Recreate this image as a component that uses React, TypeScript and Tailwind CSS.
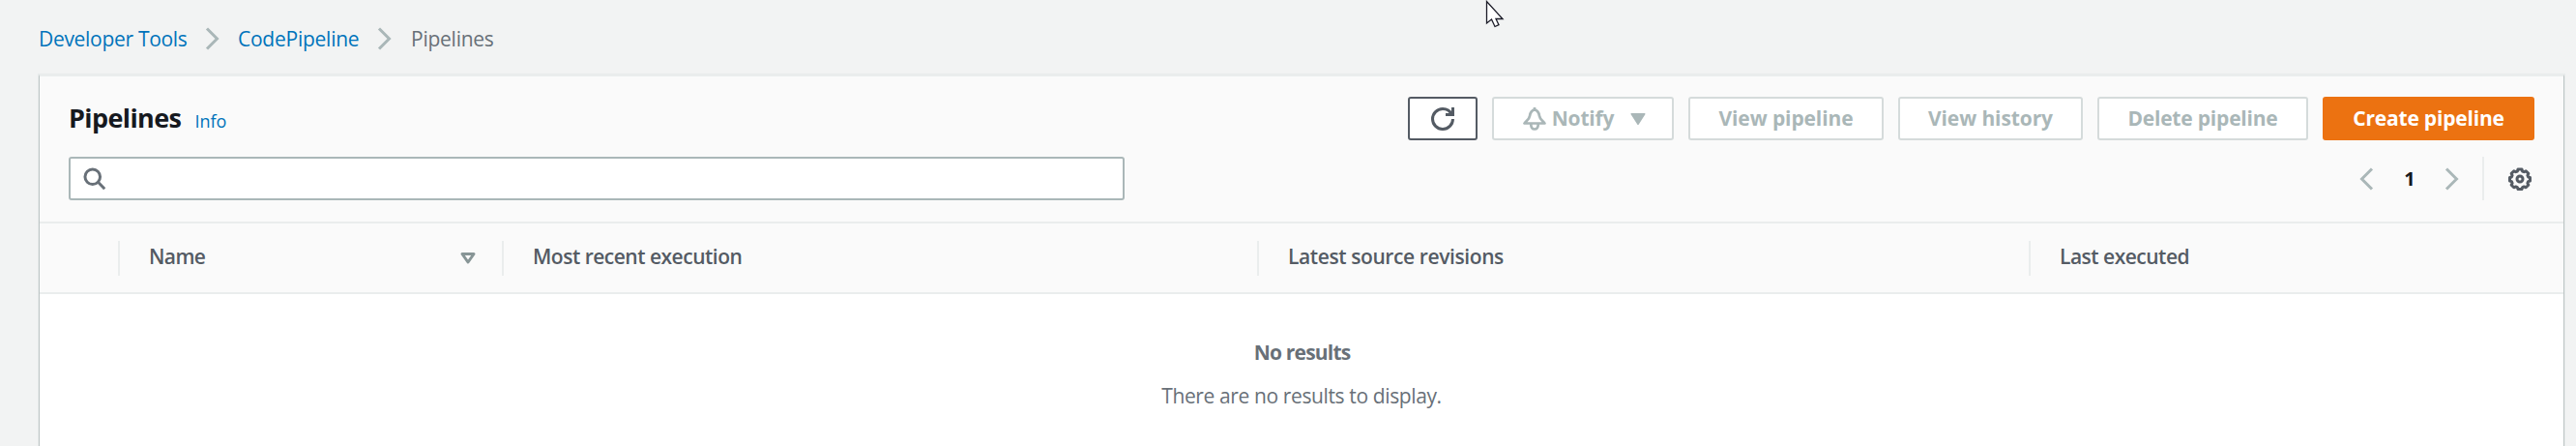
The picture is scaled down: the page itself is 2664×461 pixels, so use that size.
import { type ReactNode } from 'react';

function ChevronRight() {
  return (
    <svg className="shrink-0" width="24" height="24" viewBox="0 0 16 16" fill="none" stroke="#aab7b8" strokeWidth="2">
      <path d="M4 1l7 7-7 7" />
    </svg>
  );
}

function ChevronLeft() {
  return (
    <svg className="shrink-0" width="24" height="24" viewBox="0 0 16 16" fill="none" stroke="#aab7b8" strokeWidth="2">
      <path d="M12 1L5 8l7 7" />
    </svg>
  );
}

function Crumb({ className, children }: { className: string; children: ReactNode }) {
  return <span className={`shrink-0 whitespace-nowrap text-[21px] leading-[30px] ${className}`}>{children}</span>;
}

function Button({ className, children }: { className: string; children: ReactNode }) {
  return (
    <button
      className={`flex h-[45px] items-center justify-center rounded-[3px] border-2 pb-[2px] text-[21px] font-bold leading-[30px] whitespace-nowrap ${className}`}
    >
      {children}
    </button>
  );
}

function HeaderCell({ className, label, tracking, children }: { className: string; label: string; tracking: string; children?: ReactNode }) {
  return (
    <div className={`flex h-9 items-center justify-between border-l-2 border-[#eaeded] pl-[30px] ${className}`}>
      <span className={`pb-[3px] text-[21px] leading-[30px] font-semibold text-[#545b64] whitespace-nowrap ${tracking}`}>{label}</span>
      {children}
    </div>
  );
}

export default function App() {
  return (
    <div className="relative flex h-[461px] w-[2664px] flex-col overflow-hidden bg-[#f2f3f3] font-['Open_Sans',sans-serif]">
      <nav className="flex h-[77px] shrink-0 items-center pt-[3px] pl-[40px]">
        <Crumb className="w-[154px] tracking-[-0.3px] text-[#0073bb]">Developer Tools</Crumb>
        <div className="mr-[22px] ml-[14px] flex w-[16px]"><ChevronRight /></div>
        <Crumb className="w-[126px] tracking-[-0.25px] text-[#0073bb]">CodePipeline</Crumb>
        <div className="mr-[23px] ml-[14px] flex w-[16px]"><ChevronRight /></div>
        <Crumb className="tracking-[-0.25px] text-[#687078]">Pipelines</Crumb>
      </nav>

      <main className="mr-[12px] ml-[40px] flex flex-1 flex-col border-x border-t-2 border-x-[#bcc4c4] border-t-[#eaeded] bg-white shadow-[0_0_1px_1px_#e9ecec]">
        <section className="flex h-[150px] shrink-0 flex-col bg-[#fafafa] px-[30px] pt-[21px]">
          <div className="flex h-[45px] items-center justify-between">
            <div className="flex items-baseline pb-[2px]">
              <h1 className="text-[27px] leading-[36px] font-bold tracking-[-0.6px] text-[#16191f]">Pipelines</h1>
              <a className="ml-[14px] text-[18px] text-[#0073bb]">Info</a>
            </div>
            <div className="flex gap-[15px]">
              <Button className="w-[72px] border-[#545b64] bg-white">
                <svg className="mt-[2px]" width="24" height="24" viewBox="0 0 16 16" fill="none" stroke="#545b64" strokeWidth="2">
                  <path d="M15 8c0 3.870-3.130 7-7 7s-7-3.130-7-7 3.130-7 7-7c2.800 0 5.200 1.600 6.300 4M15 0v5h-5" />
                </svg>
              </Button>
              <Button className="w-[188px] border-[#d5dbdb] bg-white pl-[7px] text-[#aab7b8]">
                <svg className="mt-[2px]" width="24" height="24" viewBox="0 0 16 16" fill="none" stroke="#aab7b8" strokeWidth="1.800" strokeLinejoin="round">
                  <path d="M8 1.600C5.800 2.100 5 3.800 4.700 5.800 4.400 8 2.700 9 1 11h14c-1.700-2-3.400-3-3.700-5.200C11 3.800 10.200 2.100 8 1.600z M5.500 11.500c0 2.200 1 3.500 2.500 3.500s2.500-1.300 2.500-3.500 M8 0v2" />
                </svg>
                <span className="ml-[6px] tracking-[-0.2px]">Notify</span>
                <svg className="mt-[2px] ml-[13px]" width="24" height="24" viewBox="0 0 16 16" fill="#aab7b8" stroke="#aab7b8" strokeWidth="1" strokeLinejoin="round">
                  <path d="M3.500 4.500h9l-4.500 7z" />
                </svg>
              </Button>
              <Button className="w-[202px] border-[#d5dbdb] bg-white tracking-[-0.1px] text-[#aab7b8]">View pipeline</Button>
              <Button className="w-[191px] border-[#d5dbdb] bg-white tracking-[-0.1px] text-[#aab7b8]">View history</Button>
              <Button className="w-[218px] border-[#d5dbdb] bg-white tracking-[-0.2px] text-[#aab7b8]">Delete pipeline</Button>
              <Button className="w-[219px] border-[#ec7211] bg-[#ec7211] tracking-[-0.2px] text-white">Create pipeline</Button>
            </div>
          </div>

          <div className="mt-[17px] flex h-[45px] items-center justify-between">
            <div className="flex h-[45px] w-[1092px] items-center rounded-[3px] border-2 border-[#aab7b8] bg-white pl-[13px]">
              <svg width="24" height="24" viewBox="0 0 16 16" fill="none" stroke="#687078" strokeWidth="2">
                <circle cx="6.500" cy="6.500" r="5.200" />
                <path d="M10.300 10.200l4.500 4.600" />
              </svg>
            </div>
            <div className="flex h-[45px] items-center">
              <ChevronLeft />
              <span className="w-[65px] pl-px text-center text-[20px] font-bold text-[#16191f]">1</span>
              <ChevronRight />
              <div className="ml-[19px] h-[45px] w-[2px] bg-[#eaeded]" />
              <svg className="mr-[3px] ml-[25px]" width="24" height="24" viewBox="0 0 24 24" fill="none" stroke="#545b64" strokeWidth="3">
                <path strokeLinejoin="round" d="M10 2h4l.6 2 1.700.700 1.900-.9 2.600 2.600-.9 1.900.700 1.700 1.900.5v3.500l-1.900.6-.7 1.700.9 1.900-2.600 2.600-1.900-.9-1.700.7-.6 2h-4l-.6-2-1.700-.7-1.900.9-2.600-2.600.9-1.900-.7-1.700-1.900-.6v-3.500l1.900-.5.7-1.700-.9-1.900 2.600-2.600 1.900.9 1.700-.7z" />
                <circle cx="12" cy="12" r="3" />
              </svg>
            </div>
          </div>
        </section>

        <section className="flex h-[75px] shrink-0 items-center border-y-2 border-[#eaeded] bg-[#fafafa] pl-[81px]">
          <HeaderCell className="w-[397px] pr-[26px]" label="Name" tracking="tracking-[-0.6px]">
            <svg width="18" height="14" viewBox="0 0 18 14" fill="none" stroke="#879596" strokeWidth="3" strokeLinejoin="round">
              <path d="M3 2.500h12l-6 8.500z" />
            </svg>
          </HeaderCell>
          <HeaderCell className="w-[781px]" label="Most recent execution" tracking="tracking-[-0.5px]" />
          <HeaderCell className="w-[798px]" label="Latest source revisions" tracking="tracking-[-0.4px]" />
          <HeaderCell className="flex-1" label="Last executed" tracking="tracking-[-0.5px]" />
        </section>

        <section className="flex flex-col items-center pt-[45px] text-[21px] leading-[30px] text-[#687078]">
          <p className="pl-px font-bold tracking-[-0.8px]">No results</p>
          <p className="mt-[15px] tracking-[-0.38px]">There are no results to display.</p>
        </section>
      </main>

      <svg className="absolute top-0 left-[1536px]" width="22" height="30" viewBox="0 0 22 30" fill="#fff" stroke="#1c1c28" strokeWidth="1.300">
        <path d="M1.500 1.500v22.500l5-4 3.500 7.500 4-1.800-3-6.200h7z" />
      </svg>
    </div>
  );
}
